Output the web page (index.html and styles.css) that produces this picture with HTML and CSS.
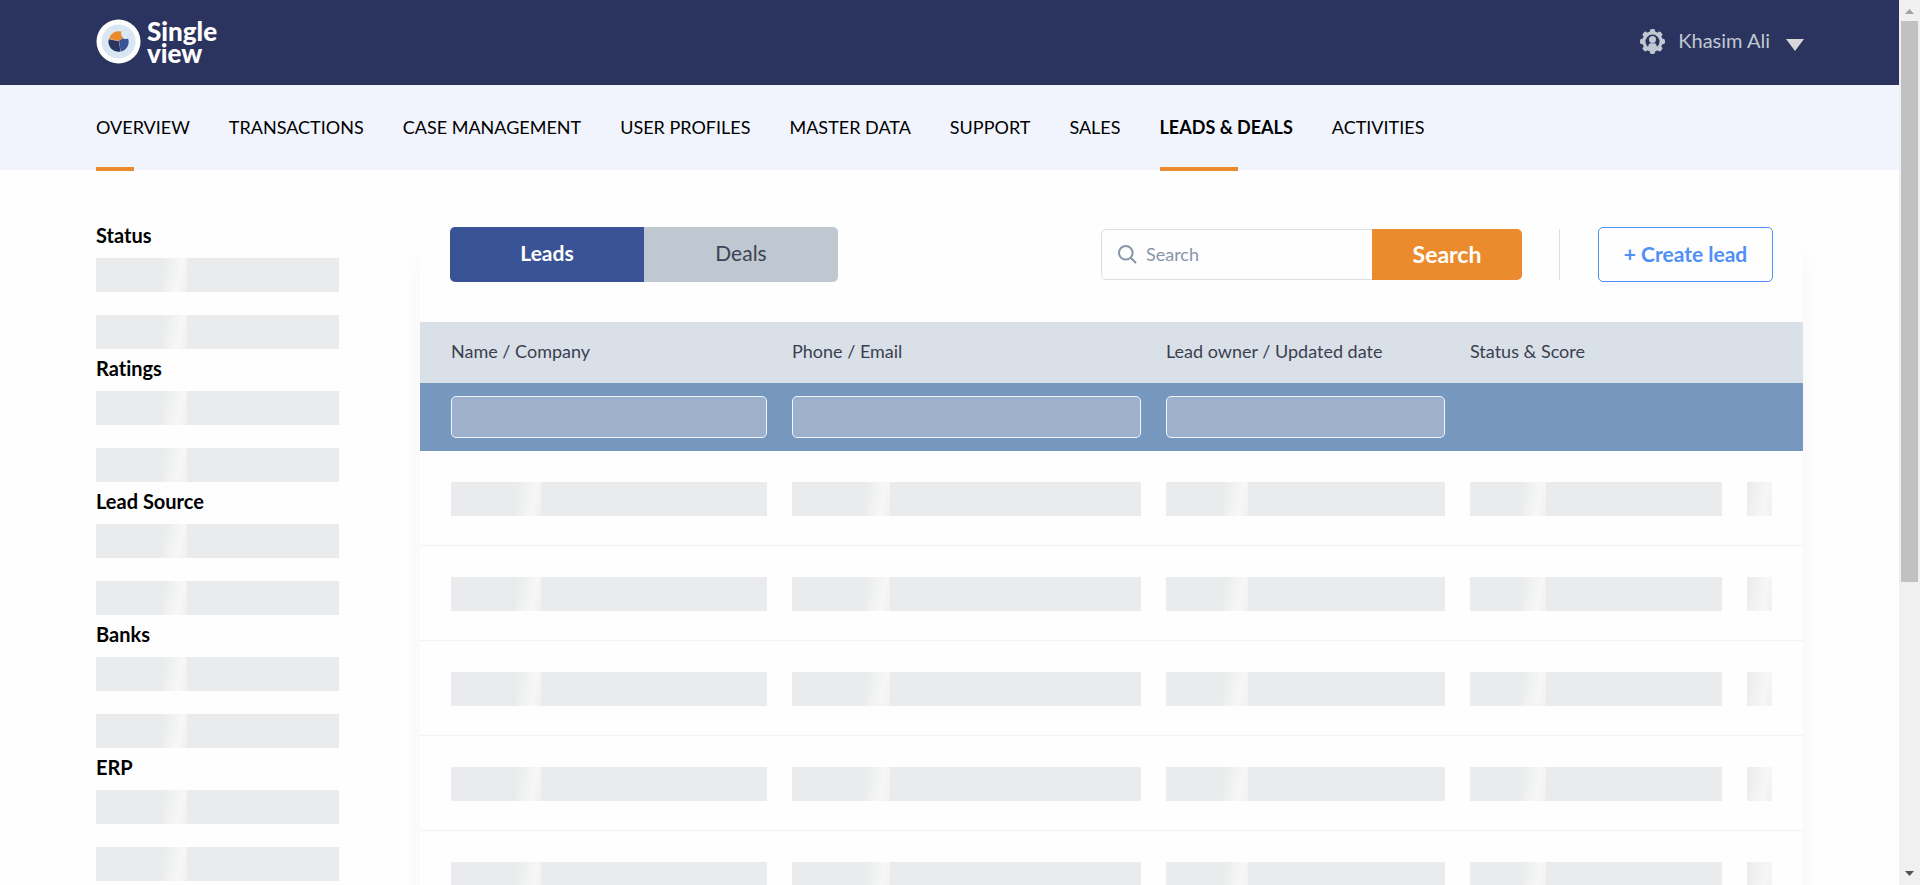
FILE: index.html
```html
<!DOCTYPE html>
<html lang="en">
<head>
<meta charset="utf-8">
<title>Single view - Leads &amp; Deals</title>
<link rel="stylesheet" href="styles.css">
</head>
<body>
<div class="app">
  <header class="topbar">
    <a class="logo" href="#" aria-label="Single view">
      <svg class="logo-mark" viewBox="0 0 46 46" aria-hidden="true">
        <circle cx="23" cy="23" r="22.5" fill="#fff"/>
        <circle cx="23" cy="23" r="17.5" fill="#d9e6f3"/>
        <path d="M23.400 22.400 L13.200 20.300 A10.300 10.300 0 0 1 26 12.900 Q24.600 17 28 19.200 Z" fill="#ec8b2d"/>
        <path d="M23.400 22.700 L13 20.800 A10.300 10.300 0 0 0 25 33.300 Z" fill="#2b345f"/>
        <path d="M23.600 22.300 L27.600 19.600 Q30 21.200 32.800 19.900 A10.300 10.300 0 0 1 25.200 33.300 Z" fill="#395396"/>
      </svg>
      <span class="logo-text">Single<br>view</span>
    </a>
    <button class="user" type="button">
      <svg class="gear" viewBox="0 0 25 25" aria-hidden="true">
        <g fill="#bfc8d1">
          <circle cx="12.5" cy="12.5" r="10.2"/>
          <rect x="9.8" y="0" width="5.4" height="25" rx="2"/>
          <rect x="0" y="9.8" width="25" height="5.4" rx="2"/>
          <rect x="9.8" y="0" width="5.4" height="25" rx="2" transform="rotate(45 12.5 12.5)"/>
          <rect x="9.8" y="0" width="5.4" height="25" rx="2" transform="rotate(-45 12.5 12.5)"/>
        </g>
        <path d="M8.6 18.4 A7 7 0 1 1 16.4 18.4 Q17 14.8 14.6 14.2 L10.4 14.2 Q8 14.8 8.6 18.4Z" fill="#2b345f"/>
        <circle cx="12.5" cy="10.6" r="3.5" fill="#bfc8d1"/>
        <path d="M8 20 Q7.600 14.900 12.500 14.900 Q17.400 14.900 17 20Z" fill="#bfc8d1"/>
      </svg>
      <span class="user-name">Khasim Ali</span>
      <svg class="caret" viewBox="0 0 18 12" aria-hidden="true"><path d="M0 0H18L9 12Z" fill="#d8d8d8"/></svg>
    </button>
  </header>

  <nav class="nav">
    <a class="nav-link marked" href="#">OVERVIEW</a>
    <a class="nav-link" href="#">TRANSACTIONS</a>
    <a class="nav-link" href="#">CASE MANAGEMENT</a>
    <a class="nav-link" href="#">USER PROFILES</a>
    <a class="nav-link" href="#">MASTER DATA</a>
    <a class="nav-link" href="#">SUPPORT</a>
    <a class="nav-link" href="#">SALES</a>
    <a class="nav-link marked current" href="#" aria-current="page">LEADS &amp; DEALS</a>
    <a class="nav-link" href="#">ACTIVITIES</a>
  </nav>

  <div class="content">
    <aside class="filters">
      <section class="filter"><h2>Status</h2><div class="skeleton"></div><div class="skeleton"></div></section>
      <section class="filter"><h2>Ratings</h2><div class="skeleton"></div><div class="skeleton"></div></section>
      <section class="filter"><h2>Lead Source</h2><div class="skeleton"></div><div class="skeleton"></div></section>
      <section class="filter"><h2>Banks</h2><div class="skeleton"></div><div class="skeleton"></div></section>
      <section class="filter"><h2>ERP</h2><div class="skeleton"></div><div class="skeleton"></div></section>
    </aside>

    <main class="panel">
      <div class="toolbar">
        <div class="tabs">
          <button class="tab active" type="button">Leads</button>
          <button class="tab" type="button">Deals</button>
        </div>
        <form class="search">
          <label class="search-box">
            <svg class="search-icon" viewBox="0 0 19 19" aria-hidden="true"><circle cx="7.800" cy="7.800" r="6.800"/><path d="M12.700 12.700L18 18"/></svg>
            <input type="text" placeholder="Search" aria-label="Search leads">
          </label>
          <button class="search-button" type="button">Search</button>
        </form>
        <div class="divider"></div>
        <button class="create" type="button">+ Create lead</button>
      </div>

      <table class="leads">
        <colgroup><col class="c-name"><col class="c-phone"><col class="c-owner"><col class="c-status"><col class="c-menu"></colgroup>
        <thead>
          <tr class="titles"><th>Name / Company</th><th>Phone / Email</th><th>Lead owner / Updated date</th><th>Status &amp; Score</th><th></th></tr>
          <tr class="inputs">
            <td><input type="text" aria-label="Filter by name or company"></td>
            <td><input type="text" aria-label="Filter by phone or email"></td>
            <td><input type="text" aria-label="Filter by lead owner or date"></td>
            <td></td><td></td>
          </tr>
        </thead>
        <tbody>
          <tr><td><div class="skeleton"></div></td><td><div class="skeleton"></div></td><td><div class="skeleton"></div></td><td><div class="skeleton"></div></td><td><div class="skeleton"></div></td></tr>
          <tr><td><div class="skeleton"></div></td><td><div class="skeleton"></div></td><td><div class="skeleton"></div></td><td><div class="skeleton"></div></td><td><div class="skeleton"></div></td></tr>
          <tr><td><div class="skeleton"></div></td><td><div class="skeleton"></div></td><td><div class="skeleton"></div></td><td><div class="skeleton"></div></td><td><div class="skeleton"></div></td></tr>
          <tr><td><div class="skeleton"></div></td><td><div class="skeleton"></div></td><td><div class="skeleton"></div></td><td><div class="skeleton"></div></td><td><div class="skeleton"></div></td></tr>
          <tr><td><div class="skeleton"></div></td><td><div class="skeleton"></div></td><td><div class="skeleton"></div></td><td><div class="skeleton"></div></td><td><div class="skeleton"></div></td></tr>
        </tbody>
      </table>
    </main>
  </div>
</div>
<div class="scrollbar" aria-hidden="true">
  <svg class="arrow" viewBox="0 0 9 5"><path d="M0 5L4.500 0L9 5Z" fill="#a3a3a3"/></svg>
  <div class="track"><div class="thumb"></div></div>
  <svg class="arrow" viewBox="0 0 9 5"><path d="M0 0L4.500 5L9 0Z" fill="#505050"/></svg>
</div>
</body>
</html>
```

FILE: styles.css
```css
* {
  box-sizing: border-box;
}

body {
  margin: 0;
  display: flex;
  height: 100vh;
  overflow: hidden;
  background: #fefefe;
  color: #000;
  font-family: Lato, "Open Sans", sans-serif;
  font-size: 18px;
  font-variant-ligatures: none;
}

button,
input {
  font: inherit;
}

button {
  border: 0;
  padding: 0;
  background: none;
}

.app {
  flex: 1;
  min-width: 0;
  overflow: hidden;
}

/* Header */

.topbar {
  display: flex;
  align-items: center;
  justify-content: space-between;
  height: 85px;
  padding: 0 95px 2px 96px;
  background: #2b345f;
}

.logo {
  display: flex;
  align-items: center;
  gap: 6px;
  color: #fff;
  text-decoration: none;
}

.logo-mark {
  width: 45px;
  height: 45px;
}

.logo-text {
  font-size: 26px;
  font-weight: 900;
  line-height: 22px;
}

.user {
  display: flex;
  align-items: center;
  gap: 13px;
  color: #bfc8d1;
  font-size: 20px;
  line-height: 24px;
}

.user-name {
  padding-bottom: 3px;
}

.gear {
  width: 25px;
  height: 25px;
}

.caret {
  width: 18px;
  height: 12px;
  margin: 6px 0 0 3px;
}

/* Main navigation */

.nav {
  display: flex;
  gap: 39px;
  height: 85px;
  padding: 0 96px;
  background: #f1f4fd;
}

.nav-link {
  position: relative;
  color: #000;
  font-size: 18px;
  line-height: 84px;
  text-decoration: none;
  white-space: nowrap;
}

.marked::after {
  content: "";
  position: absolute;
  left: 0;
  bottom: -1px;
  width: 38px;
  height: 4px;
  background: #ec8b2d;
}

.current {
  font-weight: 700;
}

.current::after {
  width: 78px;
}

/* Content */

.content {
  display: flex;
  gap: 81px;
  padding: 46px 96px 0;
}

.skeleton {
  height: 34px;
  background: #e9ebec linear-gradient(100deg, #e9ebec 0%, #f0f1f1 35%, #f7f7f7 68%, #eff0f0 100%) 22.5% 0 / 25px 100% no-repeat;
}

.filters {
  flex: 0 0 243px;
}

.filters .skeleton {
  background-position-x: 30.5%;
}

.filter h2 {
  margin: 0 0 4px;
  font-size: 20px;
  font-weight: 700;
  line-height: 38px;
}

.filter .skeleton + .skeleton {
  margin-top: 23px;
}

.panel {
  flex: 1;
  min-width: 0;
  background: #fefefe;
  box-shadow: 0 40px 24px rgba(0, 0, 0, 0.04);
}

.toolbar {
  display: flex;
  align-items: center;
  padding: 11px 30px 40px;
}

.tabs {
  display: flex;
  margin-right: auto;
  border-radius: 5px;
  overflow: hidden;
}

.tab {
  width: 194px;
  height: 55px;
  padding-bottom: 5px;
  background: #bfc8d1;
  color: #3d4252;
  font-size: 21px;
}

.tab.active {
  background: #395396;
  color: #fff;
  font-weight: 700;
}

.search {
  display: flex;
  height: 51px;
}

.search-box {
  display: flex;
  align-items: center;
  gap: 9px;
  width: 271px;
  padding-left: 16px;
  border: 1px solid #dae0e8;
  border-right: 0;
  border-radius: 5px 0 0 5px;
}

.search-icon {
  width: 19px;
  height: 19px;
  fill: none;
  stroke: #8795a8;
  stroke-width: 2;
}

.search-box input {
  flex: 1;
  min-width: 0;
  padding: 0 0 2px;
  border: 0;
  outline: 0;
  background: none;
  font-size: 18px;
}

.search-box input::placeholder {
  color: #8795a8;
  opacity: 1;
}

.search-button {
  width: 150px;
  padding-bottom: 2px;
  border-radius: 0 5px 5px 0;
  background: #ec8b2d;
  color: #fff;
  font-size: 23px;
  font-weight: 700;
}

.divider {
  width: 1px;
  height: 51px;
  margin: 0 38px 0 37px;
  background: #dae0e8;
}

.create {
  width: 175px;
  height: 55px;
  padding-bottom: 2px;
  border: 1px solid #4f8ff7;
  border-radius: 5px;
  color: #4f8ff7;
  font-size: 21px;
  font-weight: 700;
}

/* Leads table */

.leads {
  width: 100%;
  table-layout: fixed;
  border-collapse: separate;
  border-spacing: 0;
}

.c-name { width: 347px; }
.c-phone { width: 374px; }
.c-owner { width: 304px; }
.c-status { width: 277px; }
.c-menu { width: 81px; }

.leads th,
.leads td {
  padding: 0 0 0 25px;
}

.leads th:first-child,
.leads td:first-child {
  padding-left: 31px;
}

.leads th:last-child,
.leads td:last-child {
  padding-right: 31px;
}

.leads .titles th {
  height: 61px;
  padding-bottom: 3px;
  background: #dae0e7;
  color: #3a3f50;
  font-size: 18px;
  font-weight: 400;
  text-align: left;
  white-space: nowrap;
}

.inputs td {
  height: 68px;
  background: #7798be;
}

.inputs input {
  display: block;
  width: 100%;
  height: 42px;
  border: 1px solid #f1f5fd;
  border-radius: 5px;
  background: #9db1cd;
}

.leads tbody td {
  height: 95px;
  padding-top: 2px;
  border-bottom: 1px solid #f1f2f8;
}

/* Page scrollbar */

.scrollbar {
  flex: 0 0 21px;
  display: flex;
  flex-direction: column;
  align-items: center;
  gap: 7px;
  padding: 9px 2px;
  background: #f0f0f0;
}

.arrow {
  width: 9px;
  height: 5px;
}

.track {
  flex: 1;
  align-self: stretch;
}

.thumb {
  height: 66.5%;
  background: #c1c1c1;
}
```
